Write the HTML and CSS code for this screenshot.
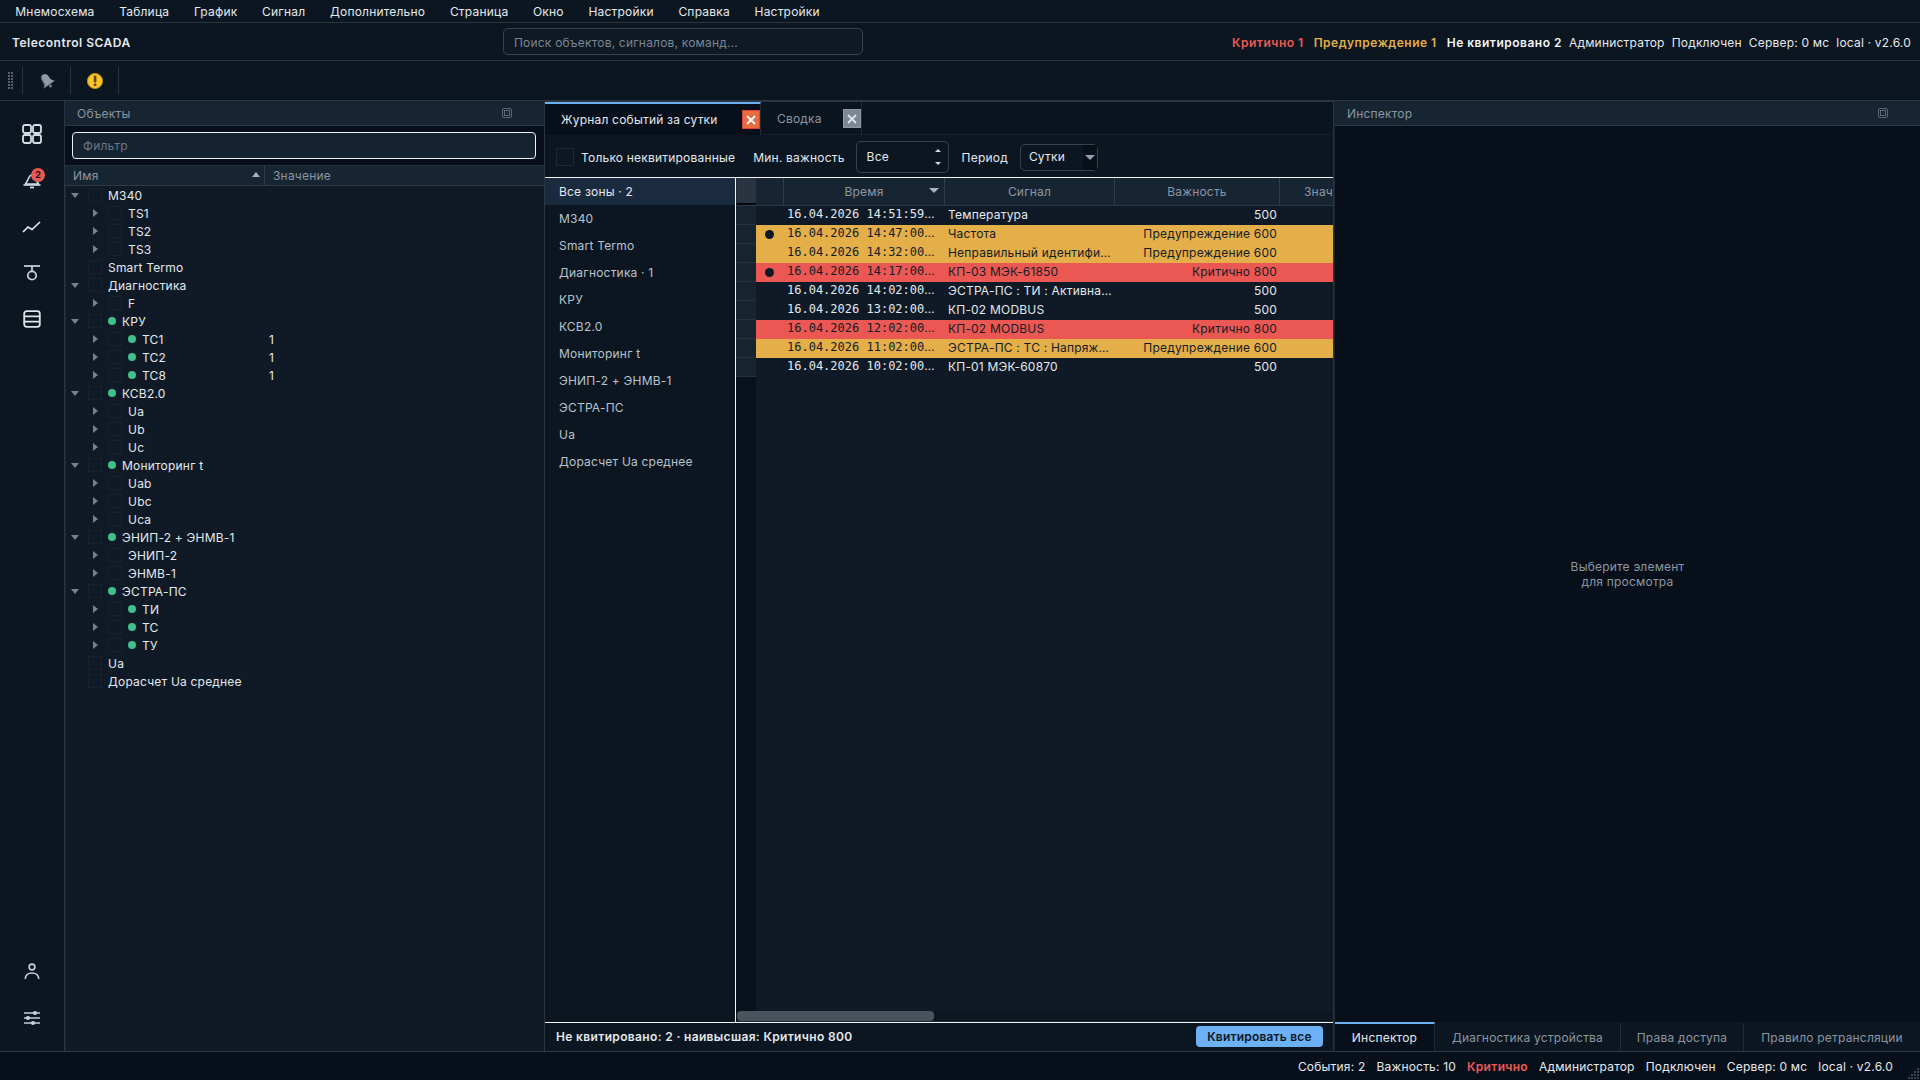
FILE: index.html

```html
<!DOCTYPE html>
<html lang="ru">
<head>
  <meta charset="UTF-8" />
  <title>Telecontrol SCADA</title>
  <link rel="stylesheet" href="styles.css">
</head>
<body>
  <div class="app">
    <nav class="menubar">
      <span>Мнемосхема</span><span>Таблица</span><span>График</span><span>Сигнал</span><span>Дополнительно</span><span>Страница</span><span>Окно</span><span>Настройки</span><span>Справка</span><span>Настройки</span>
    </nav>

    <header class="topbar">
      <div class="brand">Telecontrol SCADA</div>
      <div class="search">Поиск объектов, сигналов, команд...</div>
      <div class="top-status">
        <b class="crit">Критично 1</b>
        <b class="warn">Предупреждение 1</b>
        <b class="unack">Не квитировано 2</b>
        <span>Администратор</span>
        <span>Подключен</span>
        <span>Сервер: 0 мс</span>
        <span>local · v2.6.0</span>
      </div>
    </header>

    <div class="toolbar">
      <div class="grip"></div>
      <div class="tool">
        <svg width="18" height="18" viewBox="0 0 18 18"><g transform="rotate(-35 9 9)"><path d="M9 1.5 C12.5 1.5 13 4.5 13 8 C13 10.5 14.5 12 16 13.2 H2 C3.5 12 5 10.5 5 8 C5 4.5 5.5 1.5 9 1.5 Z" fill="#8f9aa5"/><path d="M9 1.5 C7 2 6 4 6 8 C6 10.5 5 12 4 13.2 H2 C3.5 12 5 10.5 5 8 C5 4.5 5.5 1.5 9 1.5 Z" fill="#5f6a75"/><circle cx="9" cy="15" r="1.5" fill="#6f7a85"/></g></svg>
      </div>
      <div class="tool">
        <svg width="18" height="18" viewBox="0 0 18 18"><circle cx="9" cy="9" r="7.6" fill="#f6c62b" stroke="#b98a18"/><rect x="7.8" y="3.6" width="2.6" height="7" rx="0.8" fill="#6e430f"/><rect x="7.8" y="11.6" width="2.6" height="2.4" rx="0.6" fill="#6e430f"/></svg>
      </div>
    </div>

    <div class="main">
      <aside class="rail">
        <div class="rail-btn">
          <svg width="22" height="22" viewBox="0 0 22 22" fill="none" stroke="#d5dde5" stroke-width="1.8"><rect x="2" y="2" width="8" height="8" rx="2"/><rect x="12" y="2" width="8" height="8" rx="2"/><rect x="2" y="12" width="8" height="8" rx="2"/><rect x="12" y="12" width="8" height="8" rx="2"/></svg>
        </div>
        <div class="rail-btn">
          <svg width="22" height="22" viewBox="0 0 22 22" fill="none" stroke="#d5dde5" stroke-width="1.6"><path d="M4 15 C7 14 7 6 11 6 C15 6 15 14 18 15 Z"/><path d="M2.5 16 H19.5"/><path d="M9 18.5 H13"/></svg>
          <span class="badge">2</span>
        </div>
        <div class="rail-btn">
          <svg width="20" height="14" viewBox="0 0 20 14" fill="none" stroke="#e4eaf0" stroke-width="1.7"><path d="M1 12 L6 7 L10 9.5 L18 2"/></svg>
        </div>
        <div class="rail-btn">
          <svg width="18" height="18" viewBox="0 0 18 18" fill="none" stroke="#cdd5dd" stroke-width="1.7"><path d="M1 2 H17"/><path d="M9 2 V7"/><circle cx="9" cy="11.5" r="4.2"/></svg>
        </div>
        <div class="rail-btn">
          <svg width="18" height="18" viewBox="0 0 18 18" fill="none" stroke="#dfe5eb" stroke-width="1.8"><rect x="1.2" y="1.2" width="15.6" height="15.6" rx="2.5"/><path d="M1.5 6.3 H16.5 M1.5 11.6 H16.5"/></svg>
        </div>
        <div class="rail-spacer"></div>
        <div class="rail-btn">
          <svg width="16" height="17" viewBox="0 0 16 17" fill="none" stroke="#c4ced8" stroke-width="1.6"><circle cx="8" cy="4" r="2.9"/><path d="M1.2 16 C1.5 11.5 4.5 10 8 10 C11.5 10 14.5 11.5 14.8 16"/></svg>
        </div>
        <div class="rail-btn">
          <svg width="18" height="16" viewBox="0 0 18 16" fill="#c4ced8" stroke="#c4ced8" stroke-width="1.4"><path d="M1 3 H17 M1 8 H17 M1 13 H17"/><circle cx="12" cy="3" r="1.4"/><circle cx="5" cy="8" r="1.4"/><circle cx="10" cy="13" r="1.4"/></svg>
        </div>
      </aside>

      <section class="panel objects">
        <div class="panel-title">
          <span>Объекты</span>
          <svg class="float-ico" width="10" height="10" viewBox="0 0 10 10" fill="none" stroke="#5c6773"><rect x="0.5" y="0.5" width="9" height="9" rx="1.5"/><rect x="2.5" y="2.5" width="5" height="5"/></svg>
        </div>
        <div class="filter-wrap"><div class="filter">Фильтр</div></div>
        <div class="tree-head">
          <div class="th-name">Имя<i class="tri-up"></i></div>
          <div class="th-value">Значение</div>
        </div>
        <div class="tree">
          <div class="node"><i class="tw open"></i><i class="cb"></i><span>M340</span></div>
          <div class="node sub"><i class="tw"></i><i class="cb"></i><span>TS1</span></div>
          <div class="node sub"><i class="tw"></i><i class="cb"></i><span>TS2</span></div>
          <div class="node sub"><i class="tw"></i><i class="cb"></i><span>TS3</span></div>
          <div class="node"><i class="tw none"></i><i class="cb"></i><span>Smart Termo</span></div>
          <div class="node"><i class="tw open"></i><i class="cb"></i><span>Диагностика</span></div>
          <div class="node sub"><i class="tw"></i><i class="cb"></i><span>F</span></div>
          <div class="node"><i class="tw open"></i><i class="cb"></i><i class="dot"></i><span>КРУ</span></div>
          <div class="node sub"><i class="tw"></i><i class="cb"></i><i class="dot"></i><span>ТС1</span><em>1</em></div>
          <div class="node sub"><i class="tw"></i><i class="cb"></i><i class="dot"></i><span>ТС2</span><em>1</em></div>
          <div class="node sub"><i class="tw"></i><i class="cb"></i><i class="dot"></i><span>ТС8</span><em>1</em></div>
          <div class="node"><i class="tw open"></i><i class="cb"></i><i class="dot"></i><span>КСВ2.0</span></div>
          <div class="node sub"><i class="tw"></i><i class="cb"></i><span>Ua</span></div>
          <div class="node sub"><i class="tw"></i><i class="cb"></i><span>Ub</span></div>
          <div class="node sub"><i class="tw"></i><i class="cb"></i><span>Uc</span></div>
          <div class="node"><i class="tw open"></i><i class="cb"></i><i class="dot"></i><span>Мониторинг t</span></div>
          <div class="node sub"><i class="tw"></i><i class="cb"></i><span>Uab</span></div>
          <div class="node sub"><i class="tw"></i><i class="cb"></i><span>Ubc</span></div>
          <div class="node sub"><i class="tw"></i><i class="cb"></i><span>Uca</span></div>
          <div class="node"><i class="tw open"></i><i class="cb"></i><i class="dot"></i><span>ЭНИП-2 + ЭНМВ-1</span></div>
          <div class="node sub"><i class="tw"></i><i class="cb"></i><span>ЭНИП-2</span></div>
          <div class="node sub"><i class="tw"></i><i class="cb"></i><span>ЭНМВ-1</span></div>
          <div class="node"><i class="tw open"></i><i class="cb"></i><i class="dot"></i><span>ЭСТРА-ПС</span></div>
          <div class="node sub"><i class="tw"></i><i class="cb"></i><i class="dot"></i><span>ТИ</span></div>
          <div class="node sub"><i class="tw"></i><i class="cb"></i><i class="dot"></i><span>ТС</span></div>
          <div class="node sub"><i class="tw"></i><i class="cb"></i><i class="dot"></i><span>ТУ</span></div>
          <div class="node"><i class="tw none"></i><i class="cb"></i><span>Ua</span></div>
          <div class="node"><i class="tw none"></i><i class="cb"></i><span>Дорасчет Ua среднее</span></div>
        </div>
      </section>

      <section class="center">
        <div class="tabs">
          <div class="tab active">
            <span>Журнал событий за сутки</span>
            <i class="tab-x red"><svg width="10" height="10" viewBox="0 0 10 10" stroke="#fff" stroke-width="1.8"><path d="M1 1 L9 9 M9 1 L1 9"/></svg></i>
          </div>
          <div class="tab">
            <span>Сводка</span>
            <i class="tab-x gray"><svg width="10" height="10" viewBox="0 0 10 10" stroke="#dfe4e9" stroke-width="1.8"><path d="M1 1 L9 9 M9 1 L1 9"/></svg></i>
          </div>
        </div>

        <div class="filters">
          <i class="check"></i>
          <label class="only">Только неквитированные</label>
          <label class="minsev">Мин. важность</label>
          <div class="spin">Все<i class="spin-up"></i><i class="spin-down"></i></div>
          <label class="period">Период</label>
          <div class="combo">Сутки<div class="combo-btn"><i class="tri-down"></i></div></div>
        </div>

        <div class="split">
          <div class="zones">
            <div class="zone active">Все зоны · 2</div>
            <div class="zone">M340</div>
            <div class="zone">Smart Termo</div>
            <div class="zone">Диагностика · 1</div>
            <div class="zone">КРУ</div>
            <div class="zone">КСВ2.0</div>
            <div class="zone">Мониторинг t</div>
            <div class="zone">ЭНИП-2 + ЭНМВ-1</div>
            <div class="zone">ЭСТРА-ПС</div>
            <div class="zone">Ua</div>
            <div class="zone">Дорасчет Ua среднее</div>
          </div>

          <div class="events">
            <div class="ev-head">
              <div class="corner"></div>
              <div class="hc"></div>
              <div class="hc">Время<i class="tri-down head-sort"></i></div>
              <div class="hc">Сигнал</div>
              <div class="hc">Важность</div>
              <div class="hc last">Знач</div>
            </div>
            <div class="ev-row"><i class="rh"></i><i></i><span class="time">16.04.2026 14:51:59<u>…</u></span><span>Температура</span><span class="sev">500</span></div>
            <div class="ev-row amber"><i class="rh"></i><i class="mark"></i><span class="time">16.04.2026 14:47:00<u>…</u></span><span>Частота</span><span class="sev">Предупреждение 600</span></div>
            <div class="ev-row amber"><i class="rh"></i><i></i><span class="time">16.04.2026 14:32:00<u>…</u></span><span>Неправильный идентифи…</span><span class="sev">Предупреждение 600</span></div>
            <div class="ev-row red"><i class="rh"></i><i class="mark"></i><span class="time">16.04.2026 14:17:00<u>…</u></span><span>КП-03 МЭК-61850</span><span class="sev">Критично 800</span></div>
            <div class="ev-row"><i class="rh"></i><i></i><span class="time">16.04.2026 14:02:00<u>…</u></span><span>ЭСТРА-ПС : ТИ : Активна…</span><span class="sev">500</span></div>
            <div class="ev-row"><i class="rh"></i><i></i><span class="time">16.04.2026 13:02:00<u>…</u></span><span>КП-02 MODBUS</span><span class="sev">500</span></div>
            <div class="ev-row red"><i class="rh"></i><i></i><span class="time">16.04.2026 12:02:00<u>…</u></span><span>КП-02 MODBUS</span><span class="sev">Критично 800</span></div>
            <div class="ev-row amber"><i class="rh"></i><i></i><span class="time">16.04.2026 11:02:00<u>…</u></span><span>ЭСТРА-ПС : ТС : Напряж…</span><span class="sev">Предупреждение 600</span></div>
            <div class="ev-row"><i class="rh"></i><i></i><span class="time">16.04.2026 10:02:00<u>…</u></span><span>КП-01 МЭК-60870</span><span class="sev">500</span></div>
            <div class="ev-fill"><div class="gutter"></div></div>
            <div class="hscroll"><div class="thumb"></div></div>
          </div>
        </div>

        <div class="ack-bar">
          <b>Не квитировано: 2 · наивысшая: Критично 800</b>
          <button class="ack-btn">Квитировать все</button>
        </div>
      </section>

      <section class="panel inspector">
        <div class="panel-title">
          <span>Инспектор</span>
          <svg class="float-ico" width="10" height="10" viewBox="0 0 10 10" fill="none" stroke="#5c6773"><rect x="0.5" y="0.5" width="9" height="9" rx="1.5"/><rect x="2.5" y="2.5" width="5" height="5"/></svg>
        </div>
        <div class="insp-body">Выберите элемент<br>для просмотра</div>
        <div class="insp-tabs">
          <div class="itab active">Инспектор</div>
          <div class="itab t2">Диагностика устройства</div>
          <div class="itab t3">Права доступа</div>
          <div class="itab t4">Правило ретрансляции</div>
        </div>
      </section>
    </div>

    <footer class="statusbar">
      <span>События: 2</span>
      <span>Важность: 10</span>
      <b class="crit">Критично</b>
      <span>Администратор</span>
      <span>Подключен</span>
      <span>Сервер: 0 мс</span>
      <span>local · v2.6.0</span>
      <svg class="size-grip" width="12" height="12" viewBox="0 0 12 12" fill="#3a4550"><rect x="9" y="0" width="2" height="2"/><rect x="6" y="3" width="2" height="2"/><rect x="9" y="3" width="2" height="2"/><rect x="3" y="6" width="2" height="2"/><rect x="6" y="6" width="2" height="2"/><rect x="9" y="6" width="2" height="2"/><rect x="0" y="9" width="2" height="2"/><rect x="3" y="9" width="2" height="2"/><rect x="6" y="9" width="2" height="2"/><rect x="9" y="9" width="2" height="2"/></svg>
    </footer>
  </div>
</body>
</html>
```

FILE: styles.css

```css
:root {
  --bg: #0b1621;
  --bg-dark: #07101a;
  --panel: #0f1a26;
  --head: #172533;
  --line: #2a3540;
  --text: #e4e9ee;
  --muted: #8b96a2;
  --blue: #6cb0f5;
  --amber: #e4ae49;
  --red: #eb5853;
}
* {
  box-sizing: border-box;
}
html, body {
  margin: 0;
  height: 100%;
}
body {
  font-family: Inter, "Noto Sans", sans-serif;
  font-size: 12px;
  letter-spacing: 0.2px;
  color: var(--text);
  background: var(--bg);
  overflow: hidden;
}
i {
  display: block;
  font-style: normal;
}
b {
  font-weight: 600;
  letter-spacing: 0.5px;
}
.app {
  display: flex;
  flex-direction: column;
  width: 1920px;
  height: 1080px;
}

/* top menu */
.menubar {
  display: flex;
  align-items: center;
  height: 23px;
  padding-left: 3px;
  border-bottom: 1px solid var(--line);
  flex: none;
}
.menubar span {
  padding: 0 12.33px;
}
.topbar {
  display: flex;
  align-items: center;
  height: 38px;
  flex: none;
  padding: 2px 9px 0 12px;
  border-bottom: 1px solid var(--line);
}
.brand {
  width: 491px;
  font-weight: 600;
  letter-spacing: 0.5px;
}
.search {
  width: 360px;
  height: 27px;
  line-height: 27px;
  margin-top: -2px;
  padding-left: 10px;
  border: 1px solid #36424e;
  border-radius: 5px;
  color: #7b8692;
  background: #0e1925;
}
.top-status {
  margin-left: auto;
  display: flex;
  gap: 7px;
}
.top-status b {
  margin-right: 3px;
}
.top-status b.unack {
  margin-right: 0;
}
.crit { color: #ef5a54; }
.warn { color: var(--amber); }
.unack { color: #f3f5f7; }

/* toolbar */
.toolbar {
  display: flex;
  align-items: center;
  height: 40px;
  flex: none;
  border-bottom: 1px solid var(--line);
}
.grip {
  width: 5px;
  height: 17px;
  margin: 0 9px 0 8px;
  background:
    linear-gradient(90deg, transparent 2px, #0b1621 2px) 0 0 / 3px 3px,
    linear-gradient(#55606b 2px, transparent 2px) 0 0 / 3px 3px;
}
.tool {
  width: 48px;
  height: 27px;
  border-left: 1px solid var(--line);
  display: flex;
  align-items: center;
  justify-content: center;
}
.tool:last-child {
  border-right: 1px solid var(--line);
  width: 49px;
}

/* main area */
.main {
  display: flex;
  flex: 1;
  min-height: 0;
  border-bottom: 1px solid #2f3a45;
}
.rail {
  width: 65px;
  flex: none;
  display: flex;
  flex-direction: column;
  padding: 10px 0;
  border-right: 1px solid var(--line);
  background: var(--bg);
}
.rail-btn {
  position: relative;
  height: 46.25px;
  display: flex;
  align-items: center;
  justify-content: center;
}
.rail-spacer {
  flex: 1;
}
.badge {
  position: absolute;
  left: 31px;
  top: 11px;
  width: 14px;
  height: 14px;
  line-height: 14px;
  border-radius: 50%;
  background: var(--red);
  color: #10151b;
  font-size: 9px;
  font-weight: 700;
  text-align: center;
  letter-spacing: 0;
}

.panel {
  display: flex;
  flex-direction: column;
  background: var(--bg-dark);
}
.objects {
  width: 480px;
  flex: none;
  border-right: 1px solid var(--line);
}
.panel-title {
  display: flex;
  align-items: center;
  justify-content: space-between;
  height: 25px;
  flex: none;
  padding: 0 32px 0 12px;
  background: var(--head);
  border-bottom: 1px solid #2c3a47;
  color: var(--muted);
}
.filter-wrap {
  padding: 6px 8px 6px 7px;
  flex: none;
}
.filter {
  height: 27px;
  line-height: 25px;
  padding-left: 10px;
  border: 1px solid #eef2f5;
  border-radius: 4px;
  background: #152230;
  color: #6e7985;
}
.tree-head {
  display: flex;
  height: 21px;
  flex: none;
  background: var(--head);
  border-top: 1px solid #222e3a;
  border-bottom: 1px solid #2c3a47;
  color: var(--muted);
}
.th-name {
  position: relative;
  width: 200px;
  padding-left: 8px;
  line-height: 19px;
  border-right: 1px solid #2f3c49;
}
.th-value {
  padding-left: 8px;
  line-height: 19px;
}
.tri-up {
  position: absolute;
  right: 4px;
  top: 6px;
  border: 4.5px solid transparent;
  border-top: 0;
  border-bottom: 5px solid #aab3bc;
}
.tree {
  flex: 1;
  background: var(--panel);
  border-left: 1px solid #1c2833;
}
.node {
  position: relative;
  display: flex;
  align-items: center;
  height: 18px;
  padding-left: 22px;
}
.node.sub {
  padding-left: 42px;
}
.tw {
  position: absolute;
  left: 27px;
  top: 5px;
  border: 4px solid transparent;
  border-left: 5px solid #78828d;
  border-right: 0;
}
.node .tw.open {
  left: 5px;
  top: 7px;
  border: 4.5px solid transparent;
  border-top: 5px solid #78828d;
  border-bottom: 0;
}
.tw.none {
  display: none;
}
.cb {
  width: 14px;
  height: 14px;
  margin-right: 6px;
  border: 1px solid #17222d;
  flex: none;
}
.dot {
  width: 8px;
  height: 8px;
  margin-right: 6px;
  border-radius: 50%;
  background: #3fc08c;
  flex: none;
}
.node em {
  position: absolute;
  left: 203px;
  font-style: normal;
}

/* center */
.center {
  display: flex;
  flex-direction: column;
  width: 789px;
  flex: none;
  border-right: 1px solid var(--line);
  background: var(--bg);
}
.tabs {
  display: flex;
  height: 34px;
  flex: none;
  border-top: 1px solid var(--line);
  border-bottom: 1px solid #15202b;
  background: #0a141e;
}
.tab {
  position: relative;
  display: flex;
  align-items: center;
  height: 33px;
  color: var(--muted);
  border-right: 1px solid #202b36;
}
.tab span {
  padding-left: 16px;
}
.tab.active {
  width: 216px;
  color: var(--text);
  background: var(--bg-dark);
  border-top: 2px solid var(--blue);
}
.tab:not(.active) {
  width: 101px;
}
.tab-x {
  position: absolute;
  right: 0;
  top: 7px;
  width: 18px;
  height: 19px;
  display: flex;
  align-items: center;
  justify-content: center;
}
.tab-x.red {
  top: 6px;
  background: #ea6a3f;
  border: 1px solid #d9443d;
}
.tab-x.gray {
  background: #7b8794;
  border: 1px solid #8f99a4;
}
.filters {
  position: relative;
  display: flex;
  align-items: center;
  height: 42px;
  flex: none;
  padding: 2px 0 0 11px;
}
.check {
  width: 18px;
  height: 18px;
  margin-right: 7px;
  border: 1px solid #1c2835;
  background: #0c1722;
}
.only {
  margin-right: 18px;
}
.minsev {
  margin-right: 11px;
}
.spin {
  position: relative;
  width: 93px;
  height: 32px;
  line-height: 30px;
  padding-left: 10px;
  margin-right: 13px;
  border: 1px solid #36424e;
  border-radius: 5px;
}
.spin-up, .spin-down {
  position: absolute;
  right: 7px;
  border: 3px solid transparent;
}
.spin-up {
  top: 7px;
  border-top: 0;
  border-bottom: 3px solid #d5dbe1;
}
.spin-down {
  bottom: 7px;
  border-bottom: 0;
  border-top: 3px solid #d5dbe1;
}
.period {
  margin-right: 12px;
}
.combo {
  position: relative;
  width: 78px;
  height: 27px;
  line-height: 24px;
  padding-left: 8px;
  border: 1px solid #36424e;
  border-radius: 5px;
}
.combo-btn {
  position: absolute;
  right: 0;
  top: 0;
  bottom: 0;
  width: 14px;
  background: #070f18;
  display: flex;
  align-items: center;
  justify-content: center;
}
.tri-down {
  border: 5px solid transparent;
  border-bottom: 0;
  border-top: 5px solid #98a2ac;
}
.split {
  display: flex;
  flex: 1;
  min-height: 0;
  border-top: 1px solid #f2f4f6;
  border-bottom: 1px solid #f2f4f6;
}
.zones {
  width: 191px;
  flex: none;
  border-right: 1px solid #f2f4f6;
  color: #b9c3cd;
}
.zone {
  height: 27px;
  line-height: 27px;
  padding-left: 14px;
}
.zone.active {
  background: #1a2b3f;
  color: var(--text);
}
.events {
  display: flex;
  flex-direction: column;
  flex: 1;
  min-width: 0;
  background: var(--panel);
  overflow: hidden;
}
.ev-head, .ev-row {
  display: grid;
  grid-template-columns: 20px 28px 161px 170px 165px 53px;
  flex: none;
}
.ev-head {
  height: 28px;
  background: var(--head);
  border-bottom: 1px solid #2c3a47;
  color: var(--muted);
}
.corner {
  background: #2a3440;
  border-left: 1px solid #202a34;
  border-bottom: 2px solid #05090e;
}
.hc {
  position: relative;
  line-height: 28px;
  text-align: center;
  border-right: 1px solid #2f3c49;
  white-space: nowrap;
  overflow: hidden;
}
.hc.last {
  border-right: 0;
  text-align: left;
  padding-left: 24px;
}
.head-sort {
  position: absolute;
  right: 5px;
  top: 10px;
  border-top-color: #aab3bc;
}
.ev-row {
  height: 19px;
  line-height: 18px;
  white-space: nowrap;
}
.rh {
  background: #17242f;
  border-bottom: 1px solid #25323e;
}
.time {
  font-family: "DejaVu Sans Mono", monospace;
  font-size: 12px;
  letter-spacing: 0;
  padding-left: 3px;
  line-height: 16px;
  overflow: hidden;
}
.time u {
  font-family: Inter, sans-serif;
  text-decoration: none;
}
.ev-row span:not(.time) {
  padding-left: 3px;
}
.ev-row span.sev {
  padding: 0 3px 0 0;
  text-align: right;
}
.amber, .red {
  color: #131c26;
}
.amber {
  background: var(--amber);
}
.red {
  background: var(--red);
}
.ev-row > i:nth-child(2) {
  position: relative;
}
.mark::after {
  content: "";
  position: absolute;
  left: 9px;
  top: 5px;
  width: 9px;
  height: 9px;
  border-radius: 50%;
  background: #0d1824;
}
.ev-fill {
  flex: 1;
}
.gutter {
  width: 20px;
  height: 100%;
  background: #08121c;
}
.hscroll {
  height: 11px;
  flex: none;
  background: #0c1620;
  border-bottom: 1px solid #1e2a35;
}
.thumb {
  width: 197px;
  height: 10px;
  margin-left: 1px;
  border-radius: 4px;
  background: #4a525c;
}
.ack-bar {
  display: flex;
  align-items: center;
  justify-content: space-between;
  height: 28px;
  flex: none;
  padding: 0 10px 2px 11px;
}
.ack-bar b {
  letter-spacing: 0.35px;
}
.ack-btn {
  width: 127px;
  height: 21px;
  padding: 0;
  border: 0;
  border-radius: 4px;
  background: var(--blue);
  color: #0d1722;
  font: 600 12px Inter, sans-serif;
  letter-spacing: 0.2px;
}

/* right */
.inspector {
  flex: 1;
  min-width: 0;
  border-left: 1px solid #1a2530;
}
.insp-body {
  flex: 1;
  display: flex;
  align-items: center;
  justify-content: center;
  text-align: center;
  line-height: 15px;
  color: var(--muted);
}
.insp-tabs {
  display: flex;
  height: 29px;
  flex: none;
  background: #0c1620;
  color: var(--muted);
}
.itab {
  line-height: 27px;
  text-align: center;
  border-right: 1px solid #1f2a35;
  border-top: 2px solid transparent;
}
.itab.active {
  width: 100px;
  color: var(--text);
  background: var(--bg-dark);
  border-top-color: var(--blue);
}
.itab.t2 { width: 186px; }
.itab.t3 { width: 123px; }
.itab.t4 { flex: 1; border-right: 0; }

/* footer */
.statusbar {
  position: relative;
  display: flex;
  align-items: center;
  justify-content: flex-end;
  height: 28px;
  flex: none;
  gap: 11px;
  padding-right: 27px;
  background: var(--bg-dark);
}
.statusbar b {
  letter-spacing: 0.3px;
}
.size-grip {
  position: absolute;
  right: 0;
  bottom: 0;
}
```
